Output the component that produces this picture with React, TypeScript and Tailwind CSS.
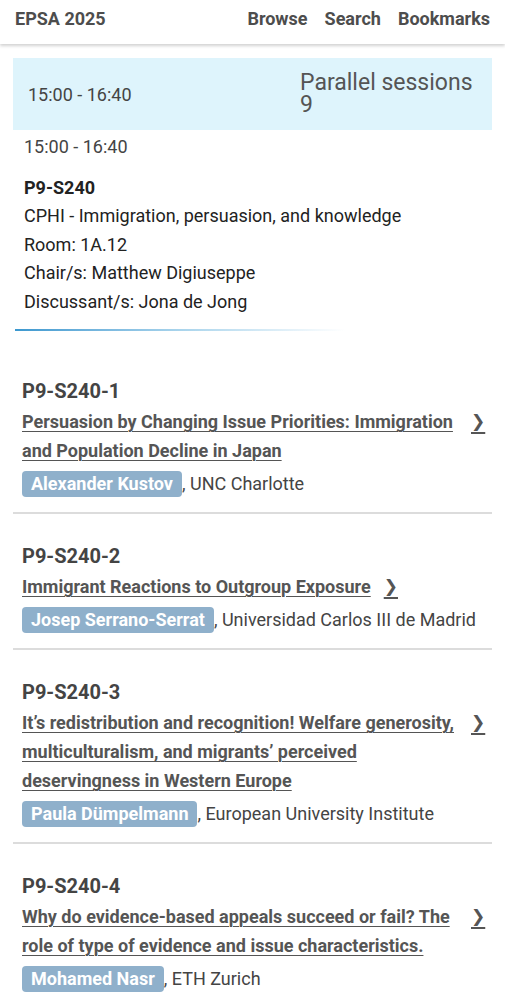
import React from "react";

type Author = { name: string; inst: string };
type Paper = { id: string; title: string; author: Author };

const papers: Paper[] = [
  {
    id: "P9-S240-1",
    title: "Persuasion by Changing Issue Priorities: Immigration and Population Decline in Japan",
    author: { name: "Alexander Kustov", inst: "UNC Charlotte" },
  },
  {
    id: "P9-S240-2",
    title: "Immigrant Reactions to Outgroup Exposure",
    author: { name: "Josep Serrano-Serrat", inst: "Universidad Carlos III de Madrid" },
  },
  {
    id: "P9-S240-3",
    title:
      "It’s redistribution and recognition! Welfare generosity, multiculturalism, and migrants’ perceived deservingness in Western Europe",
    author: { name: "Paula Dümpelmann", inst: "European University Institute" },
  },
  {
    id: "P9-S240-4",
    title: "Why do evidence-based appeals succeed or fail? The role of type of evidence and issue characteristics.",
    author: { name: "Mohamed Nasr", inst: "ETH Zurich" },
  },
];

function PaperItem({ p, last }: { p: Paper; last: boolean }) {
  return (
    <div className={"px-[9px] pb-[14px] " + (last ? "" : "border-b-2 border-[#dcdcdc]")}>
      <div className="pt-[27px] text-[20px] leading-[31px] font-bold text-[#444]">{p.id}</div>
      <div className="flex items-start">
        <a className="max-w-[436px] text-[18px] leading-[29px] font-bold text-[#555] underline underline-offset-[3px] decoration-[1px]">
          {p.title}
        </a>
        <span className="ml-[13px] w-[12px] shrink-0 text-[17px] leading-[29px] font-bold text-[#555] underline underline-offset-[5px] decoration-[2px] [font-family:'DejaVu_Sans',sans-serif]">
          ❯
        </span>
      </div>
      <div className="mt-[4px] flex items-center text-[18px] leading-[29px] text-[#444]">
        <span className="inline-flex h-[26px] items-center rounded-[4px] bg-[#8fb0cb] px-[9px] font-bold text-white">
          {p.author.name}
        </span>
        <span>, {p.author.inst}</span>
      </div>
    </div>
  );
}

export default function App() {
  return (
    <div className="min-h-[1000px] bg-white [font-family:Roboto,'Noto_Sans',sans-serif]">
      <header className="flex h-[44px] items-center justify-between bg-white px-[15px] pb-[7px] shadow-[0_2px_3px_rgba(0,0,0,0.18)]">
        <div className="text-[18px] font-bold text-[#4d4d4d]">EPSA 2025</div>
        <nav className="flex gap-[17px] text-[18px] font-bold text-[#4d4d4d]">
          <span>Browse</span>
          <span>Search</span>
          <span>Bookmarks</span>
        </nav>
      </header>
      <main className="px-[13px] pt-[14px]">
        <div className="flex h-[72px] items-center bg-[#def4fc]">
          <div className="w-[287px] pl-[15px] text-[18px] text-[#444]">15:00 - 16:40</div>
          <div className="w-[180px] text-[23px] leading-[22px] text-[#555]">Parallel sessions 9</div>
        </div>
        <div className="mt-[3px] pl-[11px] text-[18px] leading-[28.5px] text-[#444]">15:00 - 16:40</div>
        <div className="mt-[12px] pl-[11px] text-[18px] leading-[28.5px] text-[#222]">
          <div className="font-bold">P9-S240</div>
          <div>CPHI - Immigration, persuasion, and knowledge</div>
          <div>Room: 1A.12</div>
          <div>Chair/s: Matthew Digiuseppe</div>
          <div>Discussant/s: Jona de Jong</div>
        </div>
        <div className="mt-[13px] ml-[2px] h-[2px] w-[330px] bg-gradient-to-r from-[#3b98cf] via-[#a9d4ec] to-transparent" />
        <div className="mt-[18px]">
          {papers.map((p, i) => (
            <PaperItem key={p.id} p={p} last={i === papers.length - 1} />
          ))}
        </div>
      </main>
    </div>
  );
}
